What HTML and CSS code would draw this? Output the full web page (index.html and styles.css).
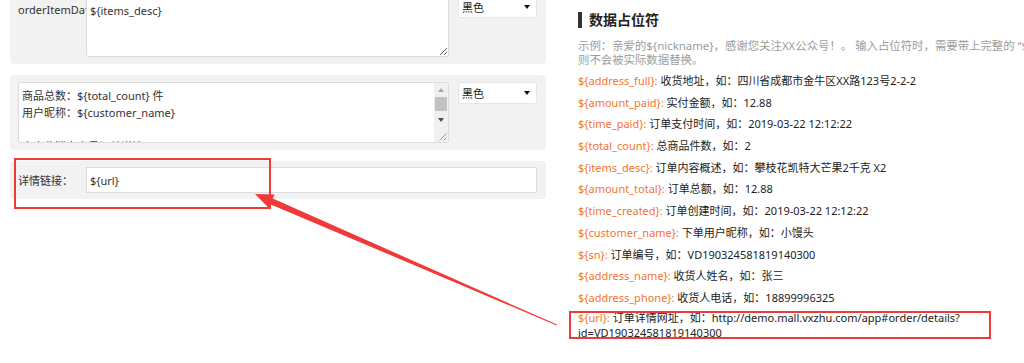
FILE: index.html
```html
<!DOCTYPE html>
<html lang="zh-CN">
<head>
<meta charset="utf-8">
<title>数据占位符</title>
<link rel="stylesheet" href="styles.css">
</head>
<body>
<div class="page">
  <div class="form-col">
    <div class="card">
      <label class="field-label">orderItemData</label>
      <textarea class="area">${items_desc}</textarea>
      <div class="color-select"><span>黑色</span><i class="caret"></i></div>
    </div>
    <div class="card">
      <div class="area-box">
        <textarea class="area-inner">商品总数：${total_count} 件
用户昵称：${customer_name}

点击此消息查看订单详情</textarea>
        <div class="vscroll">
          <div class="vs-btn"><i class="tri-up"></i></div>
          <div class="vs-track"><div class="vs-thumb"></div></div>
          <div class="vs-btn"><i class="tri-down"></i></div>
          <div class="vs-grip">
            <svg width="14" height="15" viewBox="0 0 14 15"><path d="M12.5 6.5 L5.5 13.5 M12.5 10.5 L9.5 13.5" stroke="#9a9a9a" stroke-width="1" fill="none"/></svg>
          </div>
        </div>
      </div>
      <div class="color-select"><span>黑色</span><i class="caret"></i></div>
    </div>
    <div class="card card-inline">
      <label class="field-label">详情链接：</label>
      <input class="text-input" type="text" value="${url}">
    </div>
  </div>

  <div class="info-col">
    <h3 class="info-title">数据占位符</h3>
    <p class="info-desc">示例：亲爱的${nickname}，感谢您关注XX公众号！。 输入占位符时，需要带上完整的 “${}”，否<br>则不会被实际数据替换。</p>
    <ul class="ph-list">
      <li><span class="ph">${address_full}:</span> 收货地址，如：四川省成都市金牛区XX路123号2-2-2</li>
      <li><span class="ph">${amount_paid}:</span> 实付金额，如：12.88</li>
      <li><span class="ph">${time_paid}:</span> 订单支付时间，如：2019-03-22 12:12:22</li>
      <li><span class="ph">${total_count}:</span> 总商品件数，如：2</li>
      <li><span class="ph">${items_desc}:</span> 订单内容概述，如：攀枝花凯特大芒果2千克 X2</li>
      <li><span class="ph">${amount_total}:</span> 订单总额，如：12.88</li>
      <li><span class="ph">${time_created}:</span> 订单创建时间，如：2019-03-22 12:12:22</li>
      <li><span class="ph">${customer_name}:</span> 下单用户昵称，如：小馒头</li>
      <li><span class="ph">${sn}:</span> 订单编号，如：VD190324581819140300</li>
      <li><span class="ph">${address_name}:</span> 收货人姓名，如：张三</li>
      <li><span class="ph">${address_phone}:</span> 收货人电话，如：18899996325</li>
      <li class="ph-url"><span class="ph">${url}:</span> 订单详情网址，如：http://demo.mall.vxzhu.com/app#order/details?id=VD190324581819140300</li>
    </ul>
  </div>
</div>

<svg class="annotations" width="1024" height="363" viewBox="0 0 1024 363" aria-hidden="true">
  <rect x="15" y="159" width="255" height="49" fill="none" stroke="#f03a3a" stroke-width="2"/>
  <rect x="570" y="312" width="420" height="26" fill="none" stroke="#f03a3a" stroke-width="2"/>
  <polygon points="255,194 274.5,194.6 272.8,198.6 557,324.6 556.6,325.4 270.2,204.2 268.6,207.8" fill="#f03a3a"/>
</svg>
</body>
</html>
```

FILE: styles.css
```css
* {
  box-sizing: border-box;
}

html,
body {
  margin: 0;
  overflow: hidden;
  background: #fff;
}

body {
  width: 1024px;
  height: 363px;
  position: relative;
  font-family: "Noto Sans", "Noto Sans CJK SC", sans-serif;
  font-size: 11px;
  color: #333;
}

.page {
  display: flex;
  align-items: flex-start;
  width: 1100px;
}

/* ---------- left form column ---------- */
.form-col {
  width: 546px;
  padding-left: 10px;
  margin-top: -11px;
  display: flex;
  flex-direction: column;
  gap: 11px;
}

.card {
  display: flex;
  align-items: flex-start;
  background: #f2f2f2;
  border-radius: 4px;
  padding: 7px 9px 7px 8px;
}

.card-inline {
  align-items: center;
  padding-top: 6px;
  padding-bottom: 6px;
}

.field-label {
  flex: 0 0 68px;
  width: 68px;
  overflow: hidden;
  white-space: nowrap;
  line-height: 17px;
  padding-top: 5px;
  color: #333;
}

.card-inline .field-label {
  padding-top: 0;
}

.area {
  flex: 1;
  height: 61px;
  margin: 0;
  padding: 5px 3px;
  border: 1px solid #dcdcdc;
  border-radius: 2px;
  background: #fff;
  font-family: inherit;
  font-size: 11px;
  line-height: 17px;
  color: #333;
}

/* textarea with a visible classic scrollbar */
.area-box {
  flex: 1;
  height: 61px;
  display: flex;
  border: 1px solid #dcdcdc;
  border-radius: 2px;
  background: #fff;
  overflow: hidden;
}

.area-inner {
  flex: 1;
  height: 100%;
  margin: 0;
  padding: 4px 3px 0;
  border: 0;
  resize: none;
  overflow: hidden;
  outline: none;
  background: transparent;
  font-family: inherit;
  font-size: 11px;
  line-height: 17px;
  color: #333;
}

.vscroll {
  flex: 0 0 14px;
  display: flex;
  flex-direction: column;
  background: #f0f0f0;
}

.vs-btn {
  height: 14px;
  display: flex;
  align-items: center;
  justify-content: center;
}

.tri-up {
  width: 0;
  height: 0;
  border-left: 3.5px solid transparent;
  border-right: 3.5px solid transparent;
  border-bottom: 4px solid #a8a8a8;
}

.tri-down {
  width: 0;
  height: 0;
  border-left: 3.5px solid transparent;
  border-right: 3.5px solid transparent;
  border-top: 4px solid #505050;
}

.vs-track {
  height: 16px;
  padding: 0 1px;
}

.vs-thumb {
  height: 14px;
  background: #c1c1c1;
}

.vs-grip {
  height: 15px;
  display: flex;
}

.color-select {
  flex: 0 0 79px;
  width: 79px;
  height: 22px;
  margin-left: 9px;
  display: flex;
  align-items: center;
  justify-content: space-between;
  padding: 0 6px 0 3px;
  background: #fff;
  border: 1px solid #e6e6e6;
  border-radius: 3px;
  color: #222;
}

.caret {
  width: 0;
  height: 0;
  border-left: 3px solid transparent;
  border-right: 3px solid transparent;
  border-top: 4px solid #111;
}

.text-input {
  flex: 1;
  height: 26px;
  margin: 0;
  padding: 0 3px;
  border: 1px solid #dcdcdc;
  background: #fff;
  font-family: inherit;
  font-size: 11px;
  color: #333;
}

/* ---------- right info column ---------- */
.info-col {
  width: 488px;
  margin-left: 32px;
  padding-top: 12px;
}

.info-title {
  margin: 0;
  padding-left: 7px;
  border-left: 4px solid #333;
  font-size: 14px;
  line-height: 16px;
  font-weight: 700;
  color: #222;
}

.info-desc {
  margin: 11px 0 0;
  font-size: 11.4px;
  line-height: 14px;
  white-space: nowrap;
  color: #9c9c9c;
}

.ph-list {
  list-style: none;
  margin: 6px 0 0;
  padding: 0;
  display: flex;
  flex-direction: column;
  gap: 6.7px;
}

.ph-list li {
  line-height: 15px;
  color: #222;
}

.ph-list .ph-url {
  margin-top: -2px;
}

.ph {
  color: #f5742f;
}

/* ---------- annotation overlay ---------- */
.annotations {
  position: absolute;
  left: 0;
  top: 0;
  pointer-events: none;
}
```
